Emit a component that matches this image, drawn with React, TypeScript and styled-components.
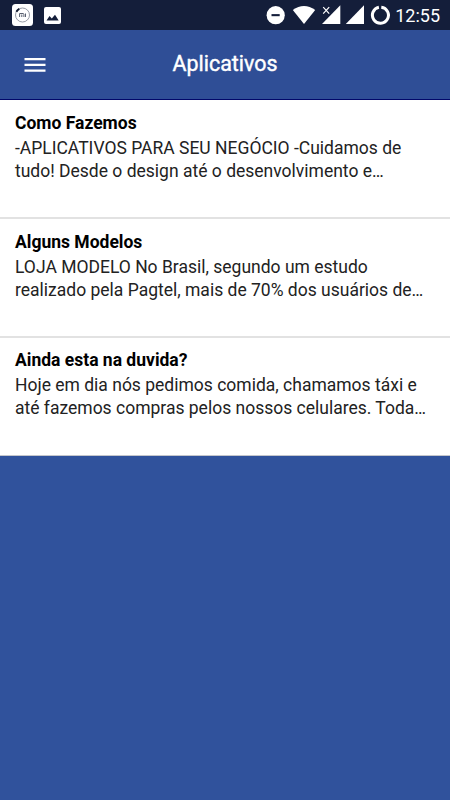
import React from "react";
import styled, { createGlobalStyle } from "styled-components";

const GlobalStyle = createGlobalStyle`
  * { box-sizing: border-box; }
  html, body { margin: 0; background: #30529c; font-family: Roboto, sans-serif; }
`;

const Screen = styled.div`
  width: 450px;
  height: 800px;
  display: flex;
  flex-direction: column;
  background: #30529c;
  overflow: hidden;
`;

const StatusBar = styled.div`
  height: 30px;
  flex: none;
  display: flex;
  justify-content: space-between;
  padding: 0 10px 0 12px;
  background: #141e3a;
`;

const StatusGroup = styled.div<{ $gap: number }>`
  display: flex;
  align-items: center;
  gap: ${(p) => p.$gap}px;
`;

const StatusIcon = styled.svg`
  display: block;
  flex: none;
`;

const Clock = styled.time`
  font-size: 18px;
  line-height: 31px;
  color: #fff;
`;

const AppBar = styled.header`
  height: 70px;
  flex: none;
  display: grid;
  grid-template-columns: 70px 1fr 70px;
  align-items: center;
  background: #2f4e96;
  border-bottom: 1px solid #02086a;
`;

const MenuButton = styled.button`
  display: flex;
  justify-content: center;
  padding: 0;
  border: 0;
  background: none;
`;

const Title = styled.h1`
  margin: 0;
  padding-bottom: 1px;
  text-align: center;
  font-size: 21.4px;
  line-height: 26px;
  font-weight: 400;
  color: #fff;
  -webkit-text-stroke: 0.4px #fff;
`;

const List = styled.ul`
  margin: 0;
  padding: 0;
  list-style: none;
`;

const Item = styled.li`
  height: 119px;
  padding: 12px 15px 0;
  background: #fff;
  border-bottom: 2px solid #e2e2e2;

  &:last-child {
    height: 118px;
    padding-top: 11px;
    border-bottom: 1px solid #c4c6cc;
  }
`;

const ItemTitle = styled.h2`
  margin: 0;
  font-size: 17.5px;
  line-height: 23px;
  font-weight: 700;
  color: #000;
`;

const ItemText = styled.p`
  margin: 2px 0 0;
  font-size: 17.5px;
  line-height: 22.5px;
  white-space: pre;
  color: #222;
`;

const items = [
  { title: "Como Fazemos", text: "-APLICATIVOS PARA SEU NEGÓCIO -Cuidamos de\ntudo! Desde o design até o desenvolvimento e…" },
  { title: "Alguns Modelos", text: "LOJA MODELO No Brasil, segundo um estudo\nrealizado pela Pagtel, mais de 70% dos usuários de…" },
  { title: "Ainda esta na duvida?", text: "Hoje em dia nós pedimos comida, chamamos táxi e\naté fazemos compras pelos nossos celulares. Toda…" },
];

const MiNotification = () => (
  <StatusIcon width="21" height="22" viewBox="0 0 21 22">
    <rect width="21" height="22" rx="3.5" fill="#fff" />
    <circle cx="10.5" cy="11" r="7" fill="none" stroke="#8b909c" strokeWidth="0.9" />
    <path d="M4.4 7.8A7 7 0 0 1 7.3 4.8" fill="none" stroke="#111a30" strokeWidth="2" />
    <path d="M7.6 13V9.5h3.4q.9 0 .9.9V13M9.8 10.5V13M13.5 9.5V13" fill="none" stroke="#596070" strokeWidth="1" />
  </StatusIcon>
);

const PictureNotification = () => (
  <StatusIcon width="17" height="17" viewBox="0 0 17 17">
    <rect width="17" height="17" rx="2" fill="#fff" />
    <path d="M2.5 13.5 5.5 9l2.3 2.6L11 7.7l3.7 5.8z" fill="#141e3a" />
  </StatusIcon>
);

const SystemIcons = () => (
  <StatusIcon width="124" height="30" viewBox="266 0 124 30" fill="#fff">
    <circle cx="275.7" cy="15.2" r="9.1" />
    <path d="M271.5 14.1h8.2v2.1h-8.2z" fill="#141e3a" />
    <path d="M292.8 10Q304 1.8 315.2 10L304 24z" />
    <path d="M340.3 5.3V24H322z" />
    <path d="M321.5 6h8v9h-8z" fill="#141e3a" />
    <path d="m323.2 7.2 6 6.4m0-6.4-6 6.4" stroke="#fff" strokeWidth="1.2" />
    <path d="M364 5.3V24h-18.2z" />
    <path d="M381.3 7.2A8 8 0 1 1 378.9 7.3" fill="none" stroke="#fff" strokeWidth="3" />
  </StatusIcon>
);

export default function App() {
  return (
    <Screen>
      <GlobalStyle />
      <StatusBar>
        <StatusGroup $gap={11}>
          <MiNotification />
          <PictureNotification />
        </StatusGroup>
        <StatusGroup $gap={5}>
          <SystemIcons />
          <Clock>12:55</Clock>
        </StatusGroup>
      </StatusBar>
      <AppBar>
        <MenuButton aria-label="Menu">
          <svg width="22" height="16" viewBox="0 0 22 16" fill="#fff">
            <path d="M.5 1h21v2.2H.5zM.5 6.7h21v2.3H.5zM.5 12.4h21v2.3H.5z" />
          </svg>
        </MenuButton>
        <Title>Aplicativos</Title>
      </AppBar>
      <List>
        {items.map((item) => (
          <Item key={item.title}>
            <ItemTitle>{item.title}</ItemTitle>
            <ItemText>{item.text}</ItemText>
          </Item>
        ))}
      </List>
    </Screen>
  );
}
